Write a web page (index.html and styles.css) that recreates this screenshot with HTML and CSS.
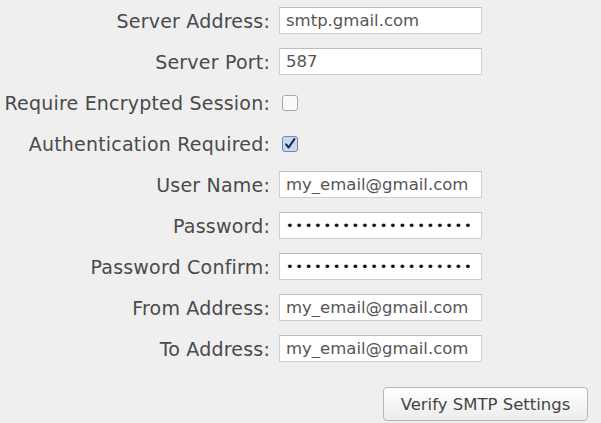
FILE: index.html
```html
<!DOCTYPE html>
<html lang="en">
<head>
<meta charset="UTF-8">
<title>SMTP Settings</title>
<link rel="stylesheet" href="styles.css">
</head>
<body>
<div class="settings">
    <div class="row">
        <label class="label">Server Address:</label>
        <input type="text" class="input" value="smtp.gmail.com">
    </div>
    <div class="row">
        <label class="label">Server Port:</label>
        <input type="text" class="input" value="587">
    </div>
    <div class="row">
        <label class="label">Require Encrypted Session:</label>
        <span class="check"></span>
    </div>
    <div class="row">
        <label class="label">Authentication Required:</label>
        <span class="check checked">
            <svg width="16" height="16" viewBox="0 0 16 16"><path d="M3.5 8.5 L6.5 12 L13 2.5" fill="none" stroke="#1d2b4a" stroke-width="2.4" stroke-linecap="round" stroke-linejoin="round"/></svg>
        </span>
    </div>
    <div class="row">
        <label class="label">User Name:</label>
        <input type="text" class="input" value="my_email@gmail.com">
    </div>
    <div class="row">
        <label class="label">Password:</label>
        <input type="text" class="input dots" value="••••••••••••••••••••">
    </div>
    <div class="row">
        <label class="label">Password Confirm:</label>
        <input type="text" class="input dots" value="••••••••••••••••••••">
    </div>
    <div class="row">
        <label class="label">From Address:</label>
        <input type="text" class="input" value="my_email@gmail.com">
    </div>
    <div class="row">
        <label class="label">To Address:</label>
        <input type="text" class="input" value="my_email@gmail.com">
    </div>
    <div class="actions">
        <button class="button">Verify SMTP Settings</button>
    </div>
</div>
</body>
</html>
```
FILE: styles.css
```css
body {
    font-family: 'DejaVu Sans', Verdana, sans-serif;
    background-color: #efefef;
    margin: 0;
    padding: 0;
    color: #444;
}
.settings {
    width: 601px;
}
.row {
    display: flex;
    align-items: center;
    height: 41px;
}
.label {
    flex: none;
    width: 270px;
    text-align: right;
    white-space: nowrap;
    font-size: 19px;
    letter-spacing: 0.2px;
    color: #4a4a4a;
    margin-right: 9px;
}
.input {
    box-sizing: border-box;
    width: 203px;
    height: 27px;
    padding: 0 6px;
    border: 1px solid #cfcfcf;
    border-top-color: #bdbdbd;
    background-color: #fff;
    font-family: 'DejaVu Sans', Verdana, sans-serif;
    font-size: 16.5px;
    color: #555;
    outline: none;
}
.dots {
    font-size: 13px;
    color: #111;
    letter-spacing: 1.7px;
}
.check {
    box-sizing: border-box;
    display: inline-flex;
    align-items: center;
    justify-content: center;
    width: 16px;
    height: 16px;
    margin-left: 3px;
    border: 1px solid #a9a9a9;
    border-radius: 3px;
    background-color: #fafafa;
}
.check.checked {
    border-color: #6f86b8;
    background-color: #c9d7f0;
}
.check svg {
    display: block;
}
.actions {
    display: flex;
    justify-content: flex-end;
    padding: 18px 13px 0 0;
}
.button {
    width: 205px;
    height: 34px;
    border: 1px solid #b5b5b5;
    border-radius: 4px;
    background: linear-gradient(#ffffff, #ececec);
    font-family: 'DejaVu Sans', Verdana, sans-serif;
    font-size: 16.5px;
    color: #444;
}
```
